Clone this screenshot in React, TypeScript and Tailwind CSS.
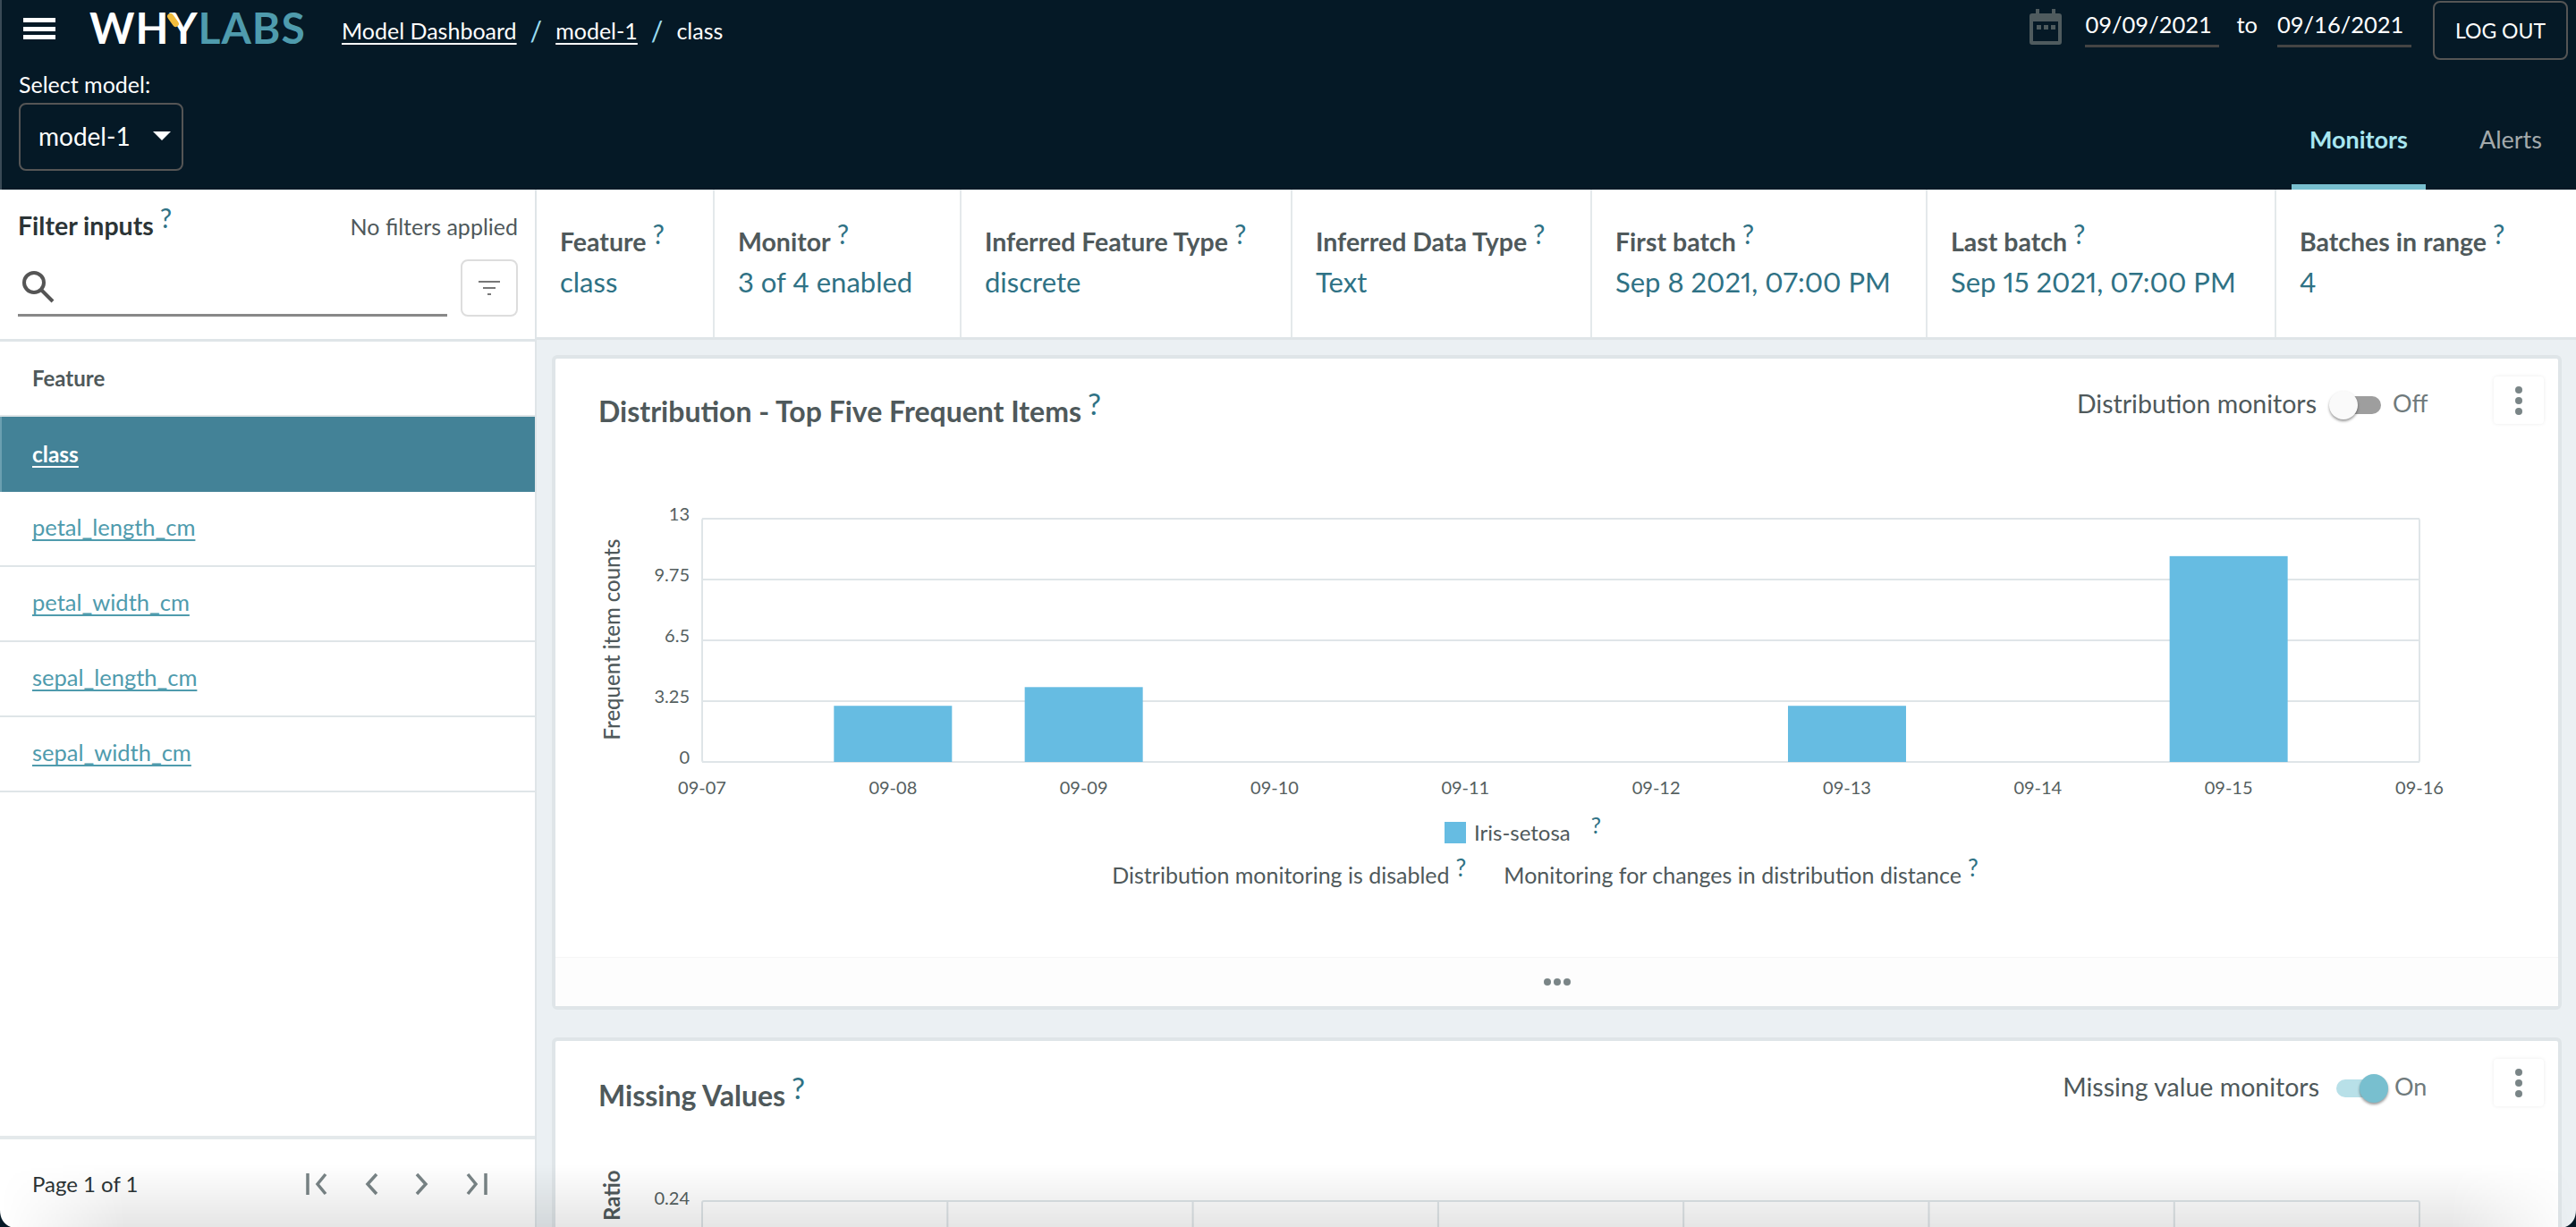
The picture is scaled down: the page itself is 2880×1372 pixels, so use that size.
import React from "react";

const FONT = "font-['Lato','Noto_Sans',sans-serif]";

const features = ["petal_length_cm", "petal_width_cm", "sepal_length_cm", "sepal_width_cm"];

const stats = [
  { label: "Feature", value: "class", width: "w-[199px]" },
  { label: "Monitor", value: "3 of 4 enabled", width: "w-[276px]" },
  { label: "Inferred Feature Type", value: "discrete", width: "w-[370px]" },
  { label: "Inferred Data Type", value: "Text", width: "w-[335px]" },
  { label: "First batch", value: "Sep 8 2021, 07:00 PM", width: "w-[375px]" },
  { label: "Last batch", value: "Sep 15 2021, 07:00 PM", width: "w-[390px]" },
  { label: "Batches in range", value: "4", width: "flex-1" },
];

const Help = ({ className = "" }: { className?: string }) => (
  <span className={`relative -top-[8px] ml-[7px] text-[1.05em] font-normal text-[#2f7285] ${className}`}>?</span>
);

const Toggle = ({ on }: { on: boolean }) =>
  on ? (
    <span className="relative block h-[20px] w-[48px] rounded-full bg-[#b8e0e8]">
      <span className="absolute -top-[6px] -right-[10px] h-[32px] w-[32px] rounded-full bg-[#78bfcf] shadow-[0_2px_3px_rgba(0,0,0,0.4)]" />
    </span>
  ) : (
    <span className="relative block h-[20px] w-[54px] rounded-full bg-[#9e9e9e]">
      <span className="absolute -top-[6px] -left-[4px] h-[32px] w-[32px] rounded-full bg-[#fafafa] shadow-[0_2px_3px_rgba(0,0,0,0.4)]" />
    </span>
  );

const MoreButton = () => (
  <div className="flex h-[53px] w-[56px] flex-col items-center justify-center gap-[4px] rounded-[4px] bg-white shadow-[0_0_4px_rgba(0,0,0,0.08)]">
    <span className="h-[8px] w-[8px] rounded-full bg-[#7a8587]" />
    <span className="h-[8px] w-[8px] rounded-full bg-[#7a8587]" />
    <span className="h-[8px] w-[8px] rounded-full bg-[#7a8587]" />
  </div>
);

const PageIcons = () => (
  <div className="flex items-center gap-[41px] text-[#7a8587]">
    <svg width="24" height="26" viewBox="0 0 24 26" fill="none" stroke="currentColor" strokeWidth="3.5">
      <path d="M2 1v24M22 2 13 13l9 11" />
    </svg>
    <svg width="16" height="26" viewBox="0 0 16 26" fill="none" stroke="currentColor" strokeWidth="3.5">
      <path d="M14 2 4 13l10 11" />
    </svg>
    <svg width="16" height="26" viewBox="0 0 16 26" fill="none" stroke="currentColor" strokeWidth="3.5">
      <path d="m2 2 10 11L2 24" />
    </svg>
    <svg width="24" height="26" viewBox="0 0 24 26" fill="none" stroke="currentColor" strokeWidth="3.5">
      <path d="M22 1v24M2 2l9 11L2 24" />
    </svg>
  </div>
);

const xTicks = ["09-07", "09-08", "09-09", "09-10", "09-11", "09-12", "09-13", "09-14", "09-15", "09-16"];
const bars = [
  { i: 1, v: 3 },
  { i: 2, v: 4 },
  { i: 6, v: 3 },
  { i: 8, v: 11 },
];
const yTicks = [
  { l: "13", y: 0 },
  { l: "9.75", y: 68 },
  { l: "6.5", y: 136 },
  { l: "3.25", y: 204 },
  { l: "0", y: 272 },
];

// origin of both charts is the card's inner left edge
const DistributionChart = () => (
  <svg width="2240" height="340" viewBox="0 0 2240 340" className="block shrink-0" fontFamily="Lato, sans-serif">
    <text transform="translate(72 155) rotate(-90)" textAnchor="middle" fontSize="24" fontWeight="500" fill="#4f595b">
      Frequent item counts
    </text>
    <rect x="164" y="20" width="1920" height="272" fill="none" stroke="#dfe5e8" strokeWidth="2" rx="2" />
    {yTicks.map((t) => (
      <g key={t.l}>
        <line x1="164" x2="2084" y1={20 + t.y} y2={20 + t.y} stroke="#dfe5e8" strokeWidth="2" />
        <text x="150" y={22 + t.y} textAnchor="end" fontSize="20" fill="#55605f">
          {t.l}
        </text>
      </g>
    ))}
    {bars.map((b) => {
      const h = (b.v / 13) * 272;
      return <rect key={b.i} x={164 + b.i * 213.33 - 66} y={292 - h} width="132" height={h} fill="#66bce2" />;
    })}
    {xTicks.map((t, i) => (
      <text key={t} x={164 + i * 213.33} y="328" textAnchor="middle" fontSize="20" fill="#55605f">
        {t}
      </text>
    ))}
  </svg>
);

const MissingChart = () => (
  <svg width="2240" height="90" viewBox="0 0 2240 90" className="block shrink-0" fontFamily="Lato, sans-serif">
    <text transform="translate(72 83) rotate(-90)" textAnchor="start" fontSize="24" fontWeight="700" fill="#4f595b">
      Ratio
    </text>
    <text x="150" y="65" textAnchor="end" fontSize="20" fill="#55605f">
      0.24
    </text>
    <rect x="164" y="61" width="1920" height="80" fill="none" stroke="#dfe5e8" strokeWidth="2" rx="2" />
    {[1, 2, 3, 4, 5, 6].map((i) => (
      <line key={i} x1={164 + i * 274.3} x2={164 + i * 274.3} y1="61" y2="90" stroke="#dfe5e8" strokeWidth="2" />
    ))}
  </svg>
);

export default function App() {
  return (
    <div className={`relative flex h-[1372px] w-[2880px] flex-col overflow-hidden bg-white ${FONT}`}>
      {/* Top bar */}
      <header className="flex h-[212px] shrink-0 flex-col border-l-2 border-[#3a4a56] bg-[#051926] text-white">
        <div className="flex h-[67px] items-start">
          <div className="mt-[20px] ml-[24px] flex h-[24px] w-[36px] flex-col justify-between">
            <span className="h-[5px] bg-white" />
            <span className="h-[5px] bg-white" />
            <span className="h-[5px] bg-white" />
          </div>
          <div className="relative mt-[4px] ml-[38px] w-[245px] text-[48px] leading-[54px] font-bold tracking-[1px] whitespace-nowrap">
            <span>WHY</span>
            <span className="text-[#4f9bad]">LABS</span>
            <span className="absolute top-[10px] left-[90px] h-[17px] w-[7px] -rotate-[35deg] rounded-full bg-[#f3bd3c]" />
          </div>
          <nav className="mt-[19px] ml-[37px] flex items-center text-[25px] leading-[30px]">
            <a className="underline underline-offset-4">Model Dashboard</a>
            <span className="mx-[15px] text-[30px] text-[#9adcf0]">/</span>
            <a className="underline underline-offset-4">model-1</a>
            <span className="mx-[15px] text-[30px] text-[#9adcf0]">/</span>
            <span>class</span>
          </nav>
          <div className="mr-[9px] ml-auto flex items-start">
            <svg width="36" height="40" viewBox="0 0 36 40" className="mt-[10px]" fill="#4f5b5e">
              <path d="M7 0h4v5h14V0h4v5h4a3 3 0 0 1 3 3v29a3 3 0 0 1-3 3H3a3 3 0 0 1-3-3V8a3 3 0 0 1 3-3h4zM4 14v22h28V14z" />
              <rect x="8" y="18" width="5" height="5" />
              <rect x="16" y="18" width="5" height="5" />
              <rect x="24" y="18" width="5" height="5" />
            </svg>
            <div className="mt-[12px] ml-[26px] h-[41px] w-[150px] border-b-[3px] border-[#444] text-[25.5px] leading-[30px]">09/09/2021</div>
            <span className="mt-[12px] ml-[19px] text-[25.5px] leading-[30px]">to</span>
            <div className="mt-[12px] ml-[22px] h-[41px] w-[150px] border-b-[3px] border-[#444] text-[25.5px] leading-[30px]">09/16/2021</div>
            <button className="mt-[1px] ml-[24px] h-[66px] w-[151px] rounded-[8px] border-2 border-[#555] text-[23px]">LOG OUT</button>
          </div>
        </div>
        <div className="flex flex-1">
          <div className="ml-[19px] flex flex-col">
            <span className="mt-[12px] text-[25px] leading-[30px]">Select model:</span>
            <div className="mt-[6px] flex h-[76px] w-[184px] items-center rounded-[8px] border-2 border-[#555] pb-[2px] pl-[20px] text-[28px]">
              model-1
              <span className="mr-[12px] ml-auto h-0 w-0 border-x-[10px] border-t-[10px] border-x-transparent border-t-white" />
            </div>
          </div>
          <div className="ml-auto flex items-end text-[27px] leading-[33px]">
            <div className="flex h-[73px] w-[150px] justify-center border-b-[6px] border-[#78bfcf] font-bold text-[#a8e6f0]">Monitors</div>
            <div className="mr-[38px] ml-[60px] flex h-[73px] justify-center text-[#a3a9ab]">Alerts</div>
          </div>
        </div>
      </header>

      <div className="flex min-h-0 flex-1">
        {/* Sidebar */}
        <aside className="flex w-[600px] shrink-0 flex-col border-r-2 border-[#dfe5e8] text-[#4f595b]">
          <div className="flex h-[170px] shrink-0 flex-col border-b-[3px] border-[#dfe5e8] pr-[19px] pl-[20px]">
            <div className="mt-[22px] flex items-baseline justify-between">
              <span className="text-[28.5px] leading-[34px] font-bold text-[#2b3436]">
                Filter inputs
                <Help />
              </span>
              <span className="text-[25px]">No filters applied</span>
            </div>
            <div className="mt-[17px] flex items-end gap-[15px]">
              <div className="flex h-[62px] flex-1 items-center border-b-[3px] border-[#888] pl-[4px]">
                <svg width="38" height="38" viewBox="0 0 38 38" fill="none" stroke="#555" strokeWidth="4">
                  <circle cx="14" cy="14" r="11" />
                  <path d="m22 22 13 13" />
                </svg>
              </div>
              <div className="flex h-[64px] w-[64px] items-center justify-center rounded-[8px] border-2 border-[#ddd]">
                <svg width="24" height="18" viewBox="0 0 24 18" fill="#777">
                  <rect x="0" y="1" width="24" height="2" />
                  <rect x="5" y="8" width="14" height="2" />
                  <rect x="10" y="15" width="4" height="2" />
                </svg>
              </div>
            </div>
          </div>
          <div className="flex h-[84px] shrink-0 items-center border-b-2 border-[#dfe5e8] pl-[36px] text-[24px] font-bold">Feature</div>
          <div className="flex h-[84px] shrink-0 items-center border-l-2 border-[#6b9fb0] bg-[#438297] pl-[34px] text-[24.5px] font-bold text-white underline underline-offset-4">
            class
          </div>
          {features.map((f) => (
            <div key={f} className="flex h-[84px] shrink-0 items-center border-b-2 border-[#dfe5e8] pb-[3px] pl-[36px] text-[25.5px] text-[#4f9bad] underline underline-offset-4">
              {f}
            </div>
          ))}
          <div className="mt-auto flex h-[102px] shrink-0 items-center justify-between border-t-4 border-[#e4e9eb] pt-[2px] pr-[53px] pl-[36px]">
            <span className="text-[24px] text-[#2b3436]">Page 1 of 1</span>
            <PageIcons />
          </div>
        </aside>

        {/* Main */}
        <main className="flex min-w-0 flex-1 flex-col bg-[#ebf0f3]">
          <div className="flex h-[168px] shrink-0 border-b-[3px] border-[#dfe5e8] bg-white">
            {stats.map((s) => (
              <div key={s.label} className={`flex flex-col border-r-2 border-[#e4e9eb] pt-[40px] pl-[26px] last:border-r-0 ${s.width}`}>
                <span className="text-[28.5px] leading-[34px] font-bold whitespace-nowrap text-[#4f595b]">
                  {s.label}
                  <Help />
                </span>
                <span className="mt-[9px] text-[31px] leading-[38px] whitespace-nowrap text-[#2f7285] [font-variant-numeric:proportional-nums]">{s.value}</span>
              </div>
            ))}
          </div>

          <div className="flex flex-col gap-[31px] pt-[17px] pr-[16px] pl-[17px]">
            {/* Distribution card */}
            <section className="flex h-[732px] shrink-0 flex-col rounded-[6px] border-4 border-[#dfe5e8] bg-white">
              <div className="flex h-[159px] shrink-0 items-start pl-[48px]">
                <h2 className="mt-[39px] text-[32px] leading-[38px] font-bold text-[#4f595b]">
                  Distribution - Top Five Frequent Items
                  <Help />
                </h2>
                <div className="mt-[34px] ml-auto flex items-center text-[28.5px] leading-[32px] text-[#4f595b]">
                  <span className="whitespace-nowrap">Distribution monitors</span>
                  <span className="mt-[4px] ml-[18px]">
                    <Toggle on={false} />
                  </span>
                  <span className="ml-[13px] w-[36px] text-[27px] text-[#6f7a7c]">Off</span>
                </div>
                <div className="mt-[20px] mr-[16px] ml-[77px]">
                  <MoreButton />
                </div>
              </div>
              <DistributionChart />
              <div className="mt-[15px] flex items-center justify-center pr-[76px] text-[24px] leading-[30px] text-[#4f595b]">
                <span className="h-[24px] w-[24px] bg-[#66bce2]" />
                <span className="ml-[9px]">Iris-setosa</span>
                <span className="ml-[16px]">
                  <Help />
                </span>
              </div>
              <div className="mt-[17px] flex justify-center gap-[42px] pr-[26px] text-[25px] leading-[30px] text-[#4f595b]">
                <span>
                  Distribution monitoring is disabled
                  <Help />
                </span>
                <span>
                  Monitoring for changes in distribution distance
                  <Help />
                </span>
              </div>
              <div className="mt-auto flex h-[55px] items-center justify-center gap-[3px] border-t border-[#f6f6f6] bg-[#fdfdfd]">
                <span className="h-[8px] w-[8px] rounded-full bg-[#7a8587]" />
                <span className="h-[8px] w-[8px] rounded-full bg-[#7a8587]" />
                <span className="h-[8px] w-[8px] rounded-full bg-[#7a8587]" />
              </div>
            </section>

            {/* Missing values card */}
            <section className="flex h-[400px] shrink-0 flex-col rounded-[6px] border-4 border-[#dfe5e8] bg-white">
              <div className="flex h-[118px] shrink-0 items-start pl-[48px]">
                <h2 className="mt-[41px] text-[32px] leading-[38px] font-bold text-[#4f595b]">
                  Missing Values
                  <Help />
                </h2>
                <div className="mt-[35px] ml-auto flex items-center text-[28.5px] leading-[32px] text-[#4f595b]">
                  <span className="whitespace-nowrap">Missing value monitors</span>
                  <span className="mt-[4px] ml-[19px]">
                    <Toggle on />
                  </span>
                  <span className="ml-[17px] w-[33px] text-[27px] text-[#6f7a7c]">On</span>
                </div>
                <div className="mt-[20px] mr-[16px] ml-[78px]">
                  <MoreButton />
                </div>
              </div>
              <MissingChart />
            </section>
          </div>
        </main>
      </div>

      {/* window edge shading and rounded corners along the bottom */}
      <div className="pointer-events-none absolute inset-x-0 bottom-0 h-[70px] bg-gradient-to-b from-transparent to-black/10 [mask-image:linear-gradient(to_right,transparent,black_140px,black_calc(100%-140px),transparent)]" />
      <svg width="12" height="19" viewBox="0 0 12 19" className="absolute bottom-0 left-0" fill="#051926">
        <path d="M0 0C0 9 4 16 12 19H0Z" />
      </svg>
      <svg width="12" height="19" viewBox="0 0 12 19" className="absolute right-0 bottom-0" fill="#051926">
        <path d="M12 0C12 9 8 16 0 19H12Z" />
      </svg>
    </div>
  );
}
